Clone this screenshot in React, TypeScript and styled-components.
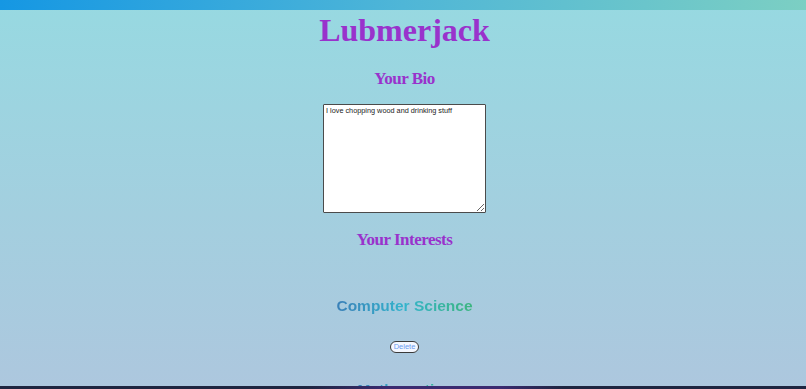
import React from "react";
import styled, { createGlobalStyle } from "styled-components";

const GlobalStyle = createGlobalStyle`
  html, body {
    margin: 0;
    padding: 0;
  }
  body {
    min-height: 100vh;
    background: linear-gradient(180deg, #97d9e1 0%, #a3cfdf 55%, #adc7de 100%);
    background-attachment: fixed;
    font-family: "Liberation Serif", "Times New Roman", serif;
  }
`;

const TopBar = styled.div`
  height: 10px;
  background: linear-gradient(90deg, #1597e3 0%, #4fb6d7 50%, #7ccfc3 100%);
`;

const Page = styled.main`
  display: flex;
  flex-direction: column;
  align-items: center;
  padding-left: 3px;
  overflow: hidden;
`;

const Title = styled.h1`
  margin: 2px 0 0;
  font-family: "Liberation Serif", "Times New Roman", serif;
  font-size: 32px;
  font-weight: bold;
  color: #9932cc;
`;

const SectionTitle = styled.h2<{ $top: number }>`
  margin: ${(p) => p.$top}px 0 0;
  font-family: "Liberation Serif", "Times New Roman", serif;
  font-size: 17px;
  letter-spacing: -0.5px;
  font-weight: bold;
  color: #9932cc;
`;

const Bio = styled.textarea`
  box-sizing: border-box;
  margin-top: 15px;
  width: 163px;
  height: 109px;
  padding: 1px 2px;
  border: 1px solid #4b4b4b;
  border-radius: 1px;
  background: #fff;
  color: #222;
  font-family: "Liberation Sans", Arial, sans-serif;
  font-size: 7.3px;
  line-height: 1.3;
  resize: both;
`;

const InterestList = styled.ul`
  list-style: none;
  margin: 47px 0 0;
  padding: 0;
  display: flex;
  flex-direction: column;
  align-items: center;
  gap: 28px;
`;

const Interest = styled.li`
  display: flex;
  flex-direction: column;
  align-items: center;
  gap: 26px;
`;

const InterestName = styled.h3`
  margin: 0;
  font-family: "Liberation Sans", Arial, sans-serif;
  font-size: 15.5px;
  font-weight: bold;
  background: linear-gradient(90deg, #3a80b8 0%, #34b4cc 50%, #3cb57e 100%);
  -webkit-background-clip: text;
  background-clip: text;
  color: transparent;
`;

const DeleteButton = styled.button`
  box-sizing: border-box;
  height: 12px;
  padding: 0 3px;
  border: 1.5px solid #3a3a3a;
  border-radius: 8px;
  background: #f4f7ff;
  color: #6b9cf0;
  font-family: "Liberation Sans", Arial, sans-serif;
  font-size: 7.5px;
  line-height: 8px;
  cursor: pointer;
`;

const BottomBar = styled.div`
  position: fixed;
  left: 0;
  right: 0;
  bottom: 0;
  height: 3px;
  background: linear-gradient(
    90deg,
    #1e2540 0%,
    #1e2540 38%,
    #3b2a70 48%,
    #3b2a70 62%,
    #1e2540 70%,
    #1e2540 100%
  );
`;

const interests = ["Computer Science", "Mathematics"];

export default function App() {
  return (
    <>
      <GlobalStyle />
      <TopBar />
      <Page>
        <Title>Lubmerjack</Title>
        <SectionTitle $top={20}>Your Bio</SectionTitle>
        <Bio
          spellCheck={false}
          defaultValue="I love chopping wood and drinking stuff"
        />
        <SectionTitle $top={17}>Your Interests</SectionTitle>
        <InterestList>
          {interests.map((name) => (
            <Interest key={name}>
              <InterestName>{name}</InterestName>
              <DeleteButton>Delete</DeleteButton>
            </Interest>
          ))}
        </InterestList>
      </Page>
      <BottomBar />
    </>
  );
}
